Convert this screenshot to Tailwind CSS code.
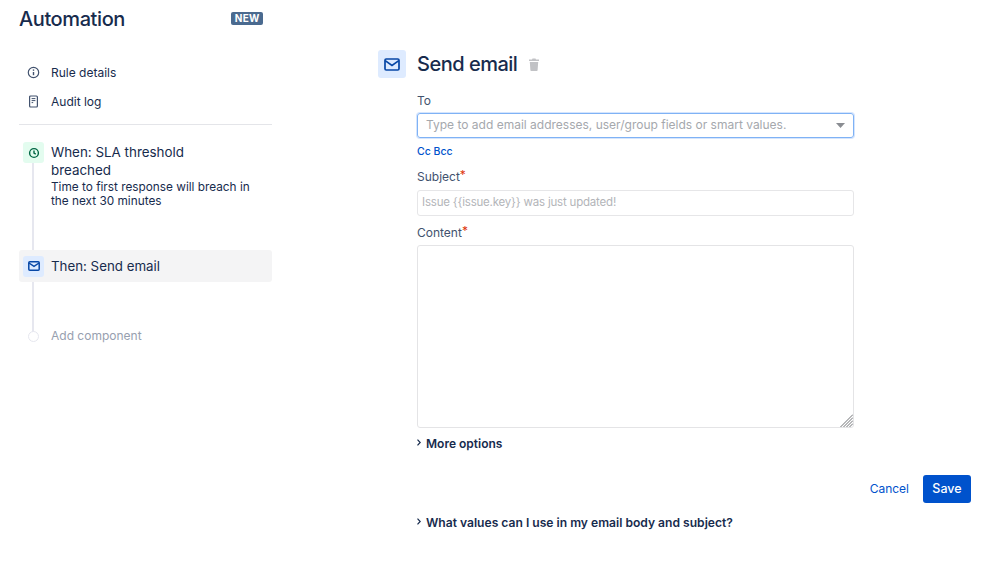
<!DOCTYPE html>
<html lang="en">
<head>
    <meta charset="UTF-8">
    <meta name="viewport" content="width=device-width, initial-scale=1.0">
    <title>Automation</title>
    <script src="https://cdn.jsdelivr.net/npm/@tailwindcss/browser@4"></script>
</head>
<body class="bg-white text-[#172b4d] font-['Inter',sans-serif] h-[562px] w-[999px] overflow-hidden">
    <div class="flex h-full">
        <!-- sidebar -->
        <aside class="w-[253px] ml-[19px] shrink-0">
            <div class="flex items-center justify-between h-[24px] mt-[7px] pr-[9px]">
                <h1 class="text-[20px] leading-[24px] font-medium tracking-[-0.4px]">Automation</h1>
                <span class="bg-[#4a6a8f] text-white text-[10px] leading-[13px] font-bold px-[3.500px] rounded-[2px] tracking-[0.2px] -mt-[1px]">NEW</span>
            </div>
            <nav class="mt-[27px] border-b border-[#e4e5e9] pb-[8px]">
                <a href="#" class="flex items-center h-[29px] pl-[8px] gap-[11px] text-[12px]">
                    <svg class="w-[13px] h-[13px]" viewBox="0 0 13 13" fill="none" stroke="#42526e">
                        <circle cx="6.500" cy="6.500" r="5.200" stroke-width="1.200"/>
                        <path d="M6.500 6v3.200" stroke-width="1.400"/>
                        <path d="M6.500 3.400v1.400" stroke-width="1.400"/>
                    </svg>
                    <span>Rule details</span>
                </a>
                <a href="#" class="flex items-center h-[29px] pl-[8px] gap-[11px] text-[12px]">
                    <svg class="w-[13px] h-[13px]" viewBox="0 0 13 13" fill="none" stroke="#42526e">
                        <rect x="2.600" y="1" width="7.800" height="11" rx="1" stroke-width="1.200"/>
                        <path d="M4.600 3.600h3.800M4.600 5.600h3.800M4.600 7.600h1.600" stroke-width="1"/>
                    </svg>
                    <span>Audit log</span>
                </a>
            </nav>
            <div class="relative mt-[17px]">
                <div class="absolute left-[12.500px] top-[10px] w-[2px] h-[180px] bg-[#e6e7ef]"></div>
                <div class="relative flex pl-[4px] gap-[7px] h-[108px]">
                    <span class="w-[21px] h-[21px] rounded-[3px] bg-[#e3fcef] flex items-center justify-center shrink-0">
                        <svg class="w-[12px] h-[12px]" viewBox="0 0 12 12" fill="none" stroke="#006644" stroke-width="1.400">
                            <circle cx="6" cy="6" r="4.400"/>
                            <path d="M6 3.400V6.200l1.800 1"/>
                        </svg>
                    </span>
                    <div class="w-[206px]">
                        <div class="text-[13.400px] leading-[18px] pt-[1px] w-[160px]">When: SLA threshold breached</div>
                        <div class="text-[11.800px] leading-[14px] pt-[1px]">Time to first response will breach in the next 30 minutes</div>
                    </div>
                </div>
                <div class="relative flex items-center h-[32px] pl-[4px] gap-[7px] bg-[#f4f4f5] rounded-[3px]">
                    <span class="w-[21px] h-[21px] rounded-[3px] bg-[#deebff] flex items-center justify-center">
                        <svg class="w-[12px] h-[10px]" viewBox="0 0 12 10" fill="none" stroke="#0747a6" stroke-width="1.500">
                            <rect x="0.800" y="0.800" width="10.400" height="8.400" rx="1"/>
                            <path d="M1 2l5 3.400L11 2"/>
                        </svg>
                    </span>
                    <span class="text-[13.300px] pt-[1px]">Then: Send email</span>
                </div>
                <div class="relative flex items-center h-[20px] mt-[44px] pl-[9px] gap-[12px]">
                    <span class="w-[11px] h-[11px] rounded-full border border-[#e6e7ef] bg-white"></span>
                    <span class="text-[12px] text-[#97a0af]">Add component</span>
                </div>
            </div>
        </aside>
        <!-- main form -->
        <main class="ml-[106px] mt-[50px] flex gap-[11px] items-start">
            <span class="w-[28px] h-[28px] rounded-[3px] bg-[#deebff] flex items-center justify-center shrink-0">
                <svg class="w-[16px] h-[13px]" viewBox="0 0 16 13" fill="none" stroke="#0747a6" stroke-width="1.700">
                    <rect x="1" y="1" width="14" height="11" rx="1.200"/>
                    <path d="M1.200 2.600L8 7.400l6.800-4.800"/>
                </svg>
            </span>
            <div class="w-[437px]">
                <div class="flex items-center h-[28px] gap-[11px]">
                    <h2 class="text-[20px] font-medium tracking-[-0.5px]">Send email</h2>
                    <svg class="w-[12px] h-[13px]" viewBox="0 0 12 13" fill="#c1c2c5">
                        <path d="M4.500 0.500h3L8 1.500h3v1.600H1V1.500h3zM1.800 4h8.400l-.6 8.200a.8.8 0 0 1-.8.8H3.200a.8.8 0 0 1-.8-.8z"/>
                    </svg>
                </div>
                <label class="block text-[12px] leading-[16px] text-[#42526e] mt-[15px]">To</label>
                <div class="mt-[4px] h-[25px] rounded-[3px] border border-[#7fb2f5] ring-1 ring-[#d5e5fd] flex items-center justify-between pl-[8px] pr-[8px]">
                    <span class="text-[12px] text-[#a5a8ad] -mt-[1px]">Type to add email addresses, user/group fields or smart values.</span>
                    <svg class="w-[9px] h-[5px]" viewBox="0 0 9 5" fill="#8a8d92"><path d="M0 0h9L4.500 5z"/></svg>
                </div>
                <a href="#" class="block mt-[7px] text-[10.500px] leading-[14px] font-medium text-[#0052cc]">Cc Bcc</a>
                <label class="block text-[12px] leading-[16px] text-[#42526e] mt-[10px]">Subject<span class="text-[#de350b] align-top text-[12px] leading-[12px]">*</span></label>
                <div class="mt-[5px] h-[26px] rounded-[3px] border border-[#e6e6e8] flex items-center pl-[4px]">
                    <span class="text-[11.500px] tracking-[-0.2px] text-[#b3b5b9]">Issue {{issue.key}} was just updated!</span>
                </div>
                <label class="block text-[12px] leading-[16px] text-[#42526e] mt-[9px]">Content<span class="text-[#de350b] align-top text-[12px] leading-[12px]">*</span></label>
                <div class="relative mt-[4px] h-[183px] rounded-[3px] border border-[#e4e4e6]">
                    <svg class="absolute right-[0px] bottom-[0px] w-[13px] h-[13px]" viewBox="0 0 13 13" stroke="#6f7175" stroke-width="1">
                        <path d="M0.500 13L13 0.500M3.500 13L13 3.500M6.500 13L13 6.500M9.500 13L13 9.500"/>
                    </svg>
                </div>
                <div class="flex items-center mt-[8px] h-[16px] gap-[5px]">
                    <svg class="w-[4px] h-[7px] -mt-[3px]" viewBox="0 0 4 7" fill="none" stroke="#172b4d" stroke-width="1.200"><path d="M0.500 0.700L3.200 3.500 0.500 6.300"/></svg>
                    <span class="text-[12px] font-semibold">More options</span>
                </div>
                <div class="flex justify-end items-center gap-[14px] mt-[23px] -mr-[117px]">
                    <a href="#" class="text-[12px] text-[#0052cc]">Cancel</a>
                    <button class="w-[48px] h-[28px] bg-[#0052cc] text-white text-[12.500px] font-medium rounded-[3px]">Save</button>
                </div>
                <div class="flex items-center mt-[12px] h-[16px] gap-[5px]">
                    <svg class="w-[4px] h-[7px] -mt-[3px]" viewBox="0 0 4 7" fill="none" stroke="#172b4d" stroke-width="1.200"><path d="M0.500 0.700L3.200 3.500 0.500 6.300"/></svg>
                    <span class="text-[12.100px] font-semibold">What values can I use in my email body and subject?</span>
                </div>
            </div>
        </main>
    </div>
</body>
</html>
